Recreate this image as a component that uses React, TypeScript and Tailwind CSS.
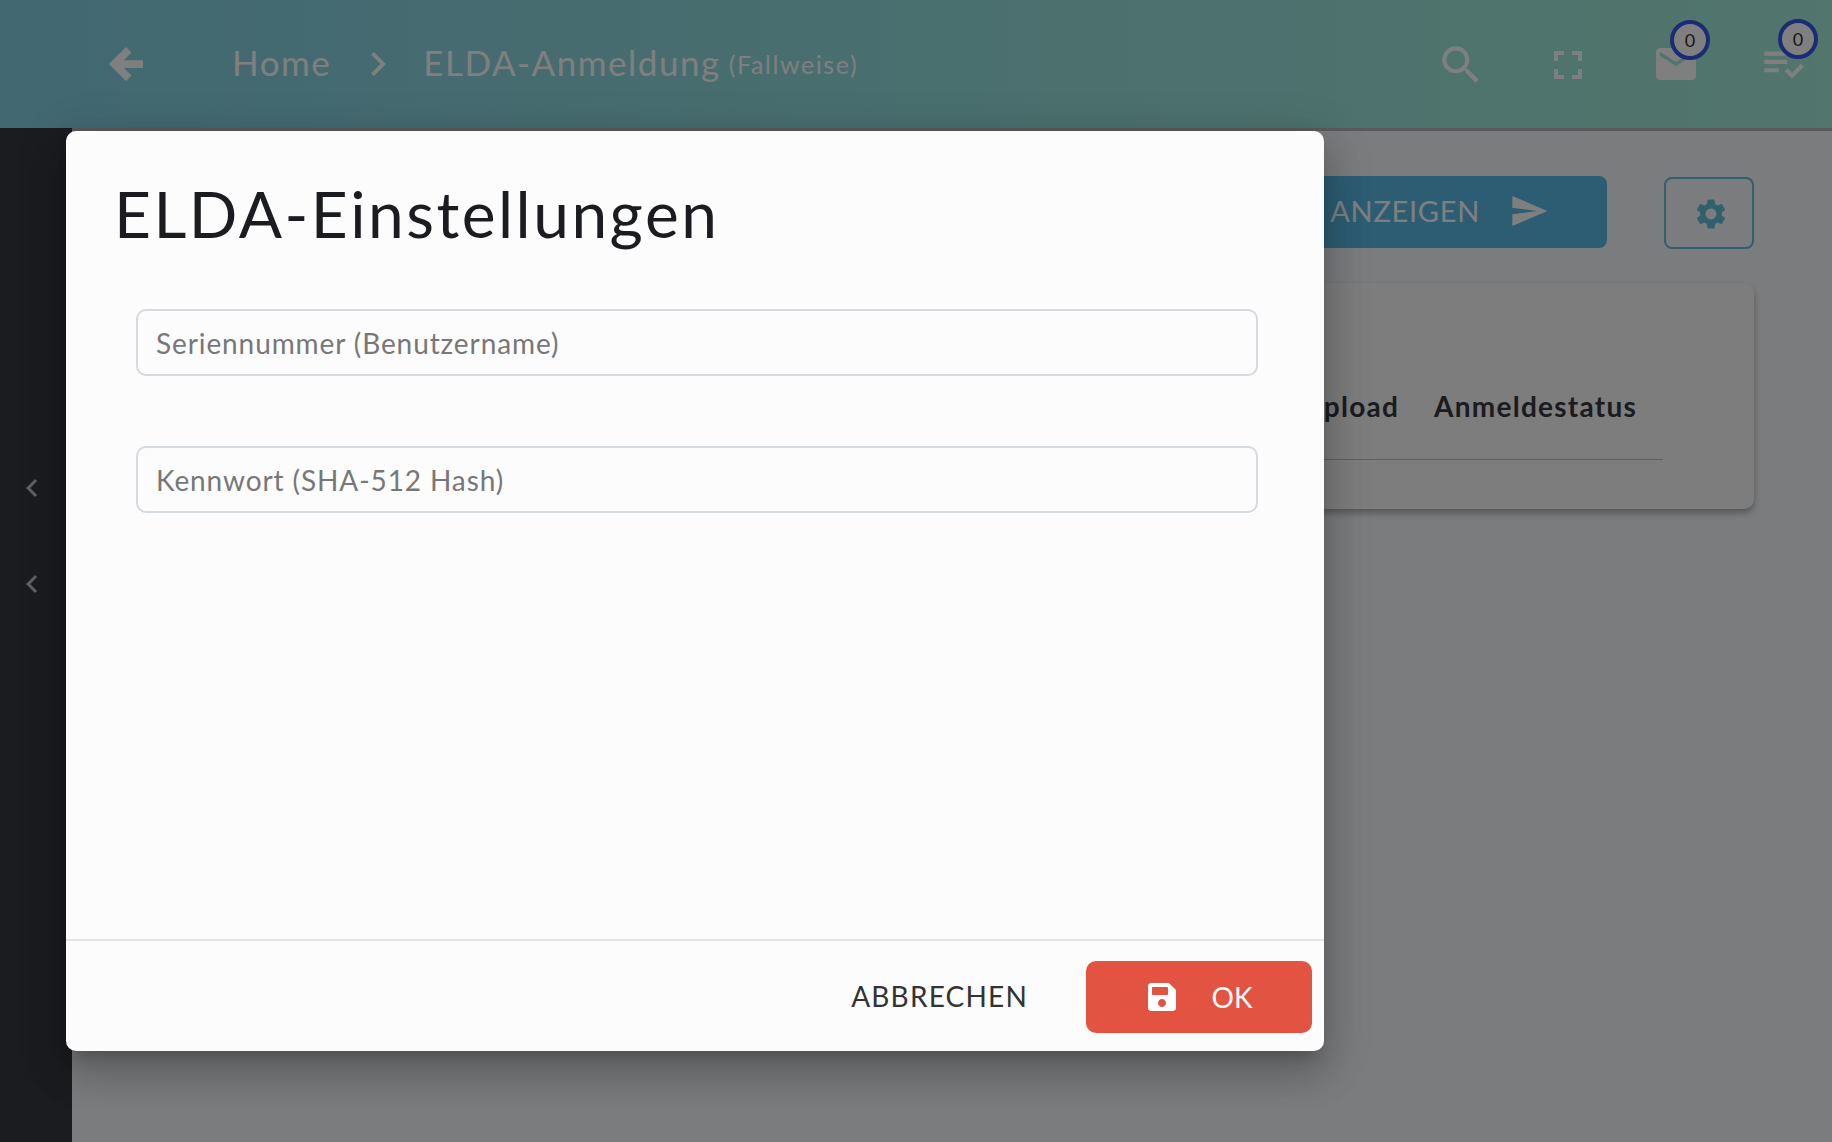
import {
  MdChevronLeft,
  MdChevronRight,
  MdEmail,
  MdFullscreen,
  MdPlaylistAddCheck,
  MdSearch,
  MdSend,
  MdSettings,
} from "react-icons/md";
import { FaSave } from "react-icons/fa";

const Badge = ({ left }: { left: string }) => (
  <span
    className={`absolute -top-[20px] ${left} flex h-[40px] w-[40px] items-center justify-center rounded-full border-4 border-[#3458f0] bg-white text-[18px] text-[#333]`}
  >
    0
  </span>
);

const BackArrow = () => (
  <svg width="34" height="34" viewBox="0 0 34 34" fill="currentColor">
    <path d="M0 17 17 0l5.500 5.500-7.700 7.800H34v7.700H14.800l7.700 7.500L17 34z" />
  </svg>
);

const Header = () => (
  <header className="flex h-[128px] shrink-0 items-center bg-gradient-to-r from-[#84d0e4] to-[#a4ecd8] pl-[109px] pr-[24px] text-white">
    <BackArrow />
    <span className="-mt-[3px] ml-[89px] text-[35px] tracking-[1.5px]">Home</span>
    <MdChevronRight size={48} className="ml-[23px]" />
    <span className="-mt-[3px] ml-[21px] text-[35px] tracking-[1.5px]">ELDA-Anmeldung</span>
    <span className="ml-[8px] mt-[2px] text-[25px] tracking-[1.6px]">(Fallweise)</span>
    <div className="ml-auto flex items-center">
      <MdSearch size={50} className="mr-[58px] mt-[2px]" />
      <MdFullscreen size={48} className="mr-[60px] mt-[2px]" />
      <div className="relative mr-[58px]">
        <MdEmail size={48} />
        <Badge left="left-[18px]" />
      </div>
      <div className="relative">
        <MdPlaylistAddCheck size={50} />
        <Badge left="left-[20px]" />
      </div>
    </div>
  </header>
);

const Sidebar = () => (
  <aside className="flex w-[72px] shrink-0 flex-col items-start bg-[#34383f] pl-[14px] pt-[342px] text-white/70">
    <MdChevronLeft size={36} />
    <MdChevronLeft size={36} className="mt-[60px]" />
  </aside>
);

const Content = () => (
  <main className="flex min-w-0 flex-1 flex-col border-t-[3px] border-[#b4b4b4] bg-[#f6f8fc] pl-[30px] pr-[78px] pt-[45px]">
    <div className="flex items-start justify-end">
      <button className="flex h-[72px] items-center gap-[29px] rounded-[8px] bg-[#5abae6] pb-[2px] pl-[40px] pr-[58px] text-[29px] tracking-[0.7px] text-white">
        DATEN ANZEIGEN
        <MdSend size={40} />
      </button>
      <button className="ml-[57px] mt-[1px] flex h-[72px] w-[90px] items-center justify-center rounded-[8px] border-2 border-[#62c0da] text-[#62c0da]">
        <MdSettings size={36} className="ml-[4px] mt-[1px]" />
      </button>
    </div>
    <div className="mt-[34px] h-[226px] rounded-[10px] bg-[#fafafa] pl-[30px] pr-[91px] pt-[102px] shadow-[0_4px_6px_rgba(0,0,0,0.3)]">
      <div className="flex justify-end gap-[35px] border-b border-[#c0c0c0] pb-[32px] text-[28px] font-bold tracking-[1.25px] text-[#34383f]">
        <span>Upload</span>
        <span className="mr-[26px]">Anmeldestatus</span>
      </div>
    </div>
  </main>
);

const Field = ({ label }: { label: string }) => (
  <input
    placeholder={label}
    className="h-[67px] w-full rounded-[10px] border-2 border-[#d5d9e0] bg-transparent px-[18px] text-[28px] tracking-[0.9px] placeholder:text-[#777]"
  />
);

const SettingsDialog = () => (
  <div className="absolute left-[66px] top-[131px] flex h-[920px] w-[1258px] flex-col rounded-[10px] bg-[#fcfcfc] shadow-[0_11px_15px_-7px_rgba(0,0,0,0.2),0_24px_38px_3px_rgba(0,0,0,0.14),0_9px_46px_8px_rgba(0,0,0,0.12)]">
    <h2 className="pl-[48px] pt-[44px] text-[64px] leading-[78px] tracking-[2.5px] text-[#1a1c20]">
      ELDA-Einstellungen
    </h2>
    <div className="flex flex-1 flex-col gap-[70px] pl-[70px] pr-[66px] pt-[56px]">
      <Field label="Seriennummer (Benutzername)" />
      <Field label="Kennwort (SHA-512 Hash)" />
    </div>
    <div className="flex h-[112px] items-center justify-end border-t-2 border-[#e3e3e3] pr-[12px] pt-[2px]">
      <button className="mr-[58px] pb-[2px] text-[28px] tracking-[1.2px] text-[#333]">ABBRECHEN</button>
      <button className="flex h-[72px] w-[226px] items-center justify-center gap-[34px] rounded-[10px] bg-[#e35342] pb-[1px] text-[28px] text-white">
        <FaSave size={32} />
        OK
      </button>
    </div>
  </div>
);

export default function App() {
  return (
    <div className="relative flex h-[1142px] flex-col overflow-hidden font-['Lato','Noto_Sans',sans-serif]">
      <Header />
      <div className="flex flex-1">
        <Sidebar />
        <Content />
      </div>
      <div className="absolute inset-0 bg-black/50" />
      <SettingsDialog />
    </div>
  );
}
